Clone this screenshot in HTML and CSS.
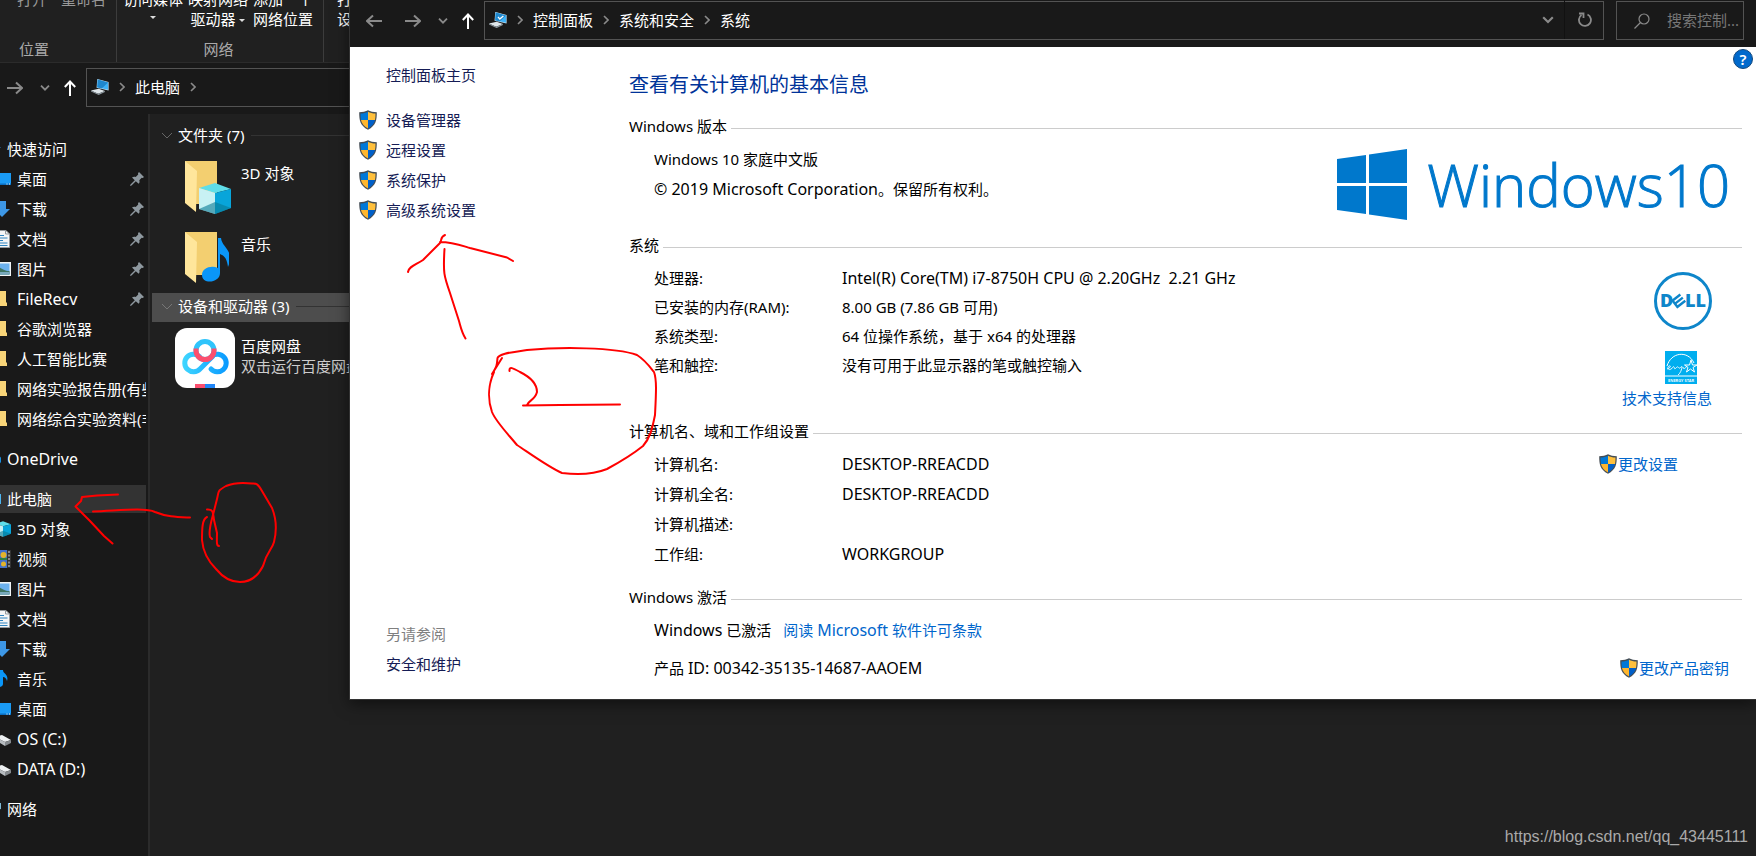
FILE: index.html
```html
<!DOCTYPE html>
<html lang="zh-CN">

<head>
    <meta charset="UTF-8">
    <meta name="viewport" content="width=device-width, initial-scale=1.0">
    <title>系统</title>
    <link rel="stylesheet" href="styles.css">
</head>

<body>
    <!-- shared icons -->
    <svg class="sprite" width="0" height="0">
        <symbol id="i-right" viewBox="0 0 16 16"><path d="M0 8h15M9 2.500L15 8l-6 5.500" fill="none" stroke="currentColor" stroke-width="2"/></symbol>
        <symbol id="i-left" viewBox="0 0 16 16"><path d="M16 8H1M7 2.500L1 8l6 5.500" fill="none" stroke="currentColor" stroke-width="2"/></symbol>
        <symbol id="i-up" viewBox="0 0 12 16"><path d="M6 16V1.500M.8 7L6 1.500 11.200 7" fill="none" stroke="currentColor" stroke-width="2"/></symbol>
        <symbol id="i-down" viewBox="0 0 10 6"><path d="M1 .7l4 4 4-4" fill="none" stroke="currentColor" stroke-width="1.800"/></symbol>
        <symbol id="i-next" viewBox="0 0 6 10"><path d="M1 1l4 4-4 4" fill="none" stroke="currentColor" stroke-width="1.600"/></symbol>
        <symbol id="i-shield" viewBox="0 0 18 20">
            <path d="M9 .3C6.800 1.600 3.500 2.200.2 2.200c0 8 .8 13.200 8.800 17.600 8-4.400 8.800-9.600 8.800-17.600C14.500 2.200 11.200 1.600 9 .3z" fill="#444d55"/>
            <path d="M9 1.700C7 2.800 4.300 3.400 1.500 3.500c0 2.400.1 4.500.5 6.500h7z" fill="#0078d7"/>
            <path d="M9 1.700c2 1.100 4.700 1.700 7.500 1.800 0 2.400-.1 4.500-.5 6.500H9z" fill="#ffc03c"/>
            <path d="M2 10c.8 3.700 2.900 6.300 7 8.500V10z" fill="#ffb62e"/>
            <path d="M16 10c-.8 3.700-2.900 6.300-7 8.500V10z" fill="#005fc8"/>
        </symbol>
        <symbol id="i-pc" viewBox="0 0 20 18">
            <path d="M7 0l12.500 3.500v9.500L6.200 9.800z" fill="#cfe2ee"/>
            <path d="M7.500.8L19 4v8L6.900 9.200z" fill="#3fb2f7"/>
            <path d="M7.500.8L19 4l-7 6.600-5.100-1.400z" fill="#1f87cd"/>
            <path d="M0 13l8.500-2 7 2.500-7.500 3z" fill="#dfe6ea"/>
            <path d="M0 13l8 3.500 7.500-3v1L8.500 18 0 14z" fill="#8c979e"/>
        </symbol>
        <symbol id="i-pin" viewBox="0 0 14 14"><path d="M9 0l5 5-1.300 1-1-.3-2.400 2.500c.5 1.500.3 2.500-.6 3.600L5.800 9.200 1.500 13.500 0 14l.5-1.500 4.300-4.300L2 5.500c1.200-1 2.300-1 3.700-.6l2.500-2.400L8 1.300z" fill="#8e989f"/></symbol>
        <symbol id="i-desktop" viewBox="0 0 16 16"><path d="M0 2h16v12H0z" fill="#1a9bf5"/><path d="M0 12.500h16V14H0z" fill="#0b6fc2"/><path d="M11.500 12.500h1v1h-1zM14 12.500h1v1h-1z" fill="#fff"/></symbol>
        <symbol id="i-download" viewBox="0 0 16 16"><path d="M3 0h8v8h4l-8 8-8-8h4z" fill="#3d97e6"/></symbol>
        <symbol id="i-doc" viewBox="0 0 16 18"><path d="M1 .5h10l3.500 3.500v13.500H1z" fill="#f4f6f7" stroke="#93999d"/><path d="M10.500.5V4h4" fill="none" stroke="#93999d"/><path d="M3 5.500h6M3 8h9.500M3 10.500h5M3 13h9.500M3 15.500h9.500" stroke="#2e84c0"/></symbol>
        <symbol id="i-pic" viewBox="0 0 16 14"><path d="M0 0h16v14H0z" fill="#f1f4f5"/><path d="M1.500 1.500h13v11h-13z" fill="#6cb2ef"/><path d="M1.500 5c5 0 6 4 13 4v3.500h-13z" fill="#3e7563"/><path d="M1.500 10h13v2.500h-13z" fill="#78a9bd"/></symbol>
        <symbol id="i-folder" viewBox="0 0 16 16"><path d="M0 0h11v11.500h1V15H0z" fill="#f7d478"/><path d="M0 0h4v16L0 15z" fill="#ffe79e"/></symbol>
        <symbol id="i-cube" viewBox="0 0 32 31"><path d="M16 0l16 6-16 4L0 5z" fill="#5fdde8"/><path d="M0 5l16 5v21L0 26z" fill="#c8f1f4"/><path d="M16 10l16-4v19l-16 6z" fill="#08a5da"/><path d="M0 26l16-7 16 6-16 6z" fill="#087a94" fill-opacity=".6"/></symbol>
        <symbol id="i-video" viewBox="0 0 16 18"><path d="M0 0h16v18H0z" fill="#333"/><path d="M0 0h12v18H0z" fill="#426fc9"/><circle cx="8.500" cy="5" r="3" fill="#e3b42b"/><path d="M5 8h7v2H5z" fill="#2c7d43"/><circle cx="8.500" cy="14" r="2.500" fill="#e3b42b"/><path d="M14 1v16" stroke="#888" stroke-width="2" stroke-dasharray="2 1.500"/></symbol>
        <symbol id="i-music" viewBox="0 0 27 44"><path d="M16 0h3c1 10 14 12 7 29-1-8-3-11-8-13v19c0 10-18 12-18 2 0-7 9-10 16-7z" fill="#0a96f8"/></symbol>
        <symbol id="i-disk" viewBox="0 0 16 16"><path d="M0 6l7-2 9 5-6 2z" fill="#eceff1"/><path d="M0 6l10 5v4L0 9z" fill="#b7bcc0"/><path d="M10 11l6-2v3l-6 3z" fill="#84898d"/></symbol>
        <symbol id="i-bigfolder" viewBox="0 0 32 51"><path d="M0 0h32v43H8z" fill="#f3cf70"/><path d="M0 0l12 10-1 41L0 42z" fill="#ffe69b"/></symbol>
    </svg>

    <div class="explorer">
        <div class="ribbon">
            <div class="ribbon-group group-place">
                <div class="ribbon-items">
                    <button class="ribbon-button off">打开</button>
                    <button class="ribbon-button off">重命名</button>
                </div>
                <div class="ribbon-label">位置</div>
            </div>
            <div class="ribbon-group group-net">
                <div class="ribbon-items">
                    <button class="ribbon-button">访问媒体<br><i class="caret up"></i></button>
                    <button class="ribbon-button">映射网络<br>驱动器 <i class="caret"></i></button>
                    <button class="ribbon-button">添加一个<br>网络位置</button>
                </div>
                <div class="ribbon-label">网络</div>
            </div>
            <div class="ribbon-group group-settings">
                <div class="ribbon-items">
                    <button class="ribbon-button">打开<br>设置</button>
                </div>
            </div>
        </div>

        <div class="address-row">
            <button class="nav-button" aria-label="前进"><svg width="16" height="16"><use href="#i-right"/></svg></button>
            <button class="nav-button" aria-label="最近"><svg width="10" height="6"><use href="#i-down"/></svg></button>
            <button class="nav-button bright" aria-label="上移"><svg width="12" height="16"><use href="#i-up"/></svg></button>
            <div class="address-box">
                <svg width="18" height="18"><use href="#i-pc"/></svg>
                <svg class="sep" width="6" height="10"><use href="#i-next"/></svg>
                <span>此电脑</span>
                <svg class="sep" width="6" height="10"><use href="#i-next"/></svg>
            </div>
        </div>

        <div class="explorer-body">
            <nav class="tree">
                <ul class="tree-group">
                    <li class="tree-item"><svg viewBox="0 0 16 16"><path d="M8 1l2 5h6l-5 4 2 6-5-4-5 4 2-6-5-4h6z" fill="#2f9df0"/></svg><span>快速访问</span></li>
                    <li class="tree-item child"><svg><use href="#i-desktop"/></svg><span>桌面</span><svg class="pin"><use href="#i-pin"/></svg></li>
                    <li class="tree-item child"><svg><use href="#i-download"/></svg><span>下载</span><svg class="pin"><use href="#i-pin"/></svg></li>
                    <li class="tree-item child"><svg><use href="#i-doc"/></svg><span>文档</span><svg class="pin"><use href="#i-pin"/></svg></li>
                    <li class="tree-item child"><svg><use href="#i-pic"/></svg><span>图片</span><svg class="pin"><use href="#i-pin"/></svg></li>
                    <li class="tree-item child"><svg><use href="#i-folder"/></svg><span class="latin">FileRecv</span><svg class="pin"><use href="#i-pin"/></svg></li>
                    <li class="tree-item child"><svg><use href="#i-folder"/></svg><span>谷歌浏览器</span></li>
                    <li class="tree-item child"><svg><use href="#i-folder"/></svg><span>人工智能比赛</span></li>
                    <li class="tree-item child"><svg><use href="#i-folder"/></svg><span>网络实验报告册(有些</span></li>
                    <li class="tree-item child"><svg><use href="#i-folder"/></svg><span>网络综合实验资料(非</span></li>
                </ul>
                <ul class="tree-group">
                    <li class="tree-item"><svg viewBox="0 0 16 16"><circle cx="12" cy="9" r="4.500" fill="#1a8fe0"/></svg><span class="latin">OneDrive</span></li>
                </ul>
                <ul class="tree-group">
                    <li class="tree-item selected"><svg viewBox="0 0 16 16"><path d="M0 3h16v10H0z" fill="#4db5f0"/></svg><span>此电脑</span></li>
                    <li class="tree-item child"><svg><use href="#i-cube"/></svg><span>3D 对象</span></li>
                    <li class="tree-item child"><svg><use href="#i-video"/></svg><span>视频</span></li>
                    <li class="tree-item child"><svg><use href="#i-pic"/></svg><span>图片</span></li>
                    <li class="tree-item child"><svg><use href="#i-doc"/></svg><span>文档</span></li>
                    <li class="tree-item child"><svg><use href="#i-download"/></svg><span>下载</span></li>
                    <li class="tree-item child"><svg viewBox="0 0 16 18"><path d="M5 0h3c0 4 6 4 4 11-1-3-2-4-4-4v7c0 4-8 4-8 0 0-3 3-4 5-3z" fill="#0a96f8"/></svg><span>音乐</span></li>
                    <li class="tree-item child"><svg><use href="#i-desktop"/></svg><span>桌面</span></li>
                    <li class="tree-item child"><svg><use href="#i-disk"/></svg><span class="latin">OS (C:)</span></li>
                    <li class="tree-item child"><svg><use href="#i-disk"/></svg><span class="latin">DATA (D:)</span></li>
                </ul>
                <ul class="tree-group">
                    <li class="tree-item"><svg viewBox="0 0 16 16"><path d="M4 3l12-1v6L6 11z" fill="#7fb9d4"/></svg><span>网络</span></li>
                </ul>
            </nav>

            <div class="files">
                <div class="files-header"><svg width="12" height="7" viewBox="0 0 12 7"><path d="M1 1l5 5 5-5" fill="none" stroke="#666"/></svg>文件夹 (7)</div>
                <div class="file">
                    <svg class="file-icon" viewBox="0 0 60 60">
                        <use href="#i-bigfolder" x="10" y="4" width="32" height="51"/>
                        <use href="#i-cube" x="24" y="26" width="32" height="31"/>
                    </svg>
                    <div class="file-text">3D 对象</div>
                </div>
                <div class="file">
                    <svg class="file-icon" viewBox="0 0 60 60">
                        <use href="#i-bigfolder" x="10" y="4" width="32" height="51"/>
                        <use href="#i-music" x="27" y="10" width="27" height="44"/>
                    </svg>
                    <div class="file-text">音乐</div>
                </div>
                <div class="files-header active"><svg width="12" height="7" viewBox="0 0 12 7"><path d="M1 1l5 5 5-5" fill="none" stroke="#777"/></svg>设备和驱动器 (3)</div>
                <div class="file">
                    <svg class="file-icon" viewBox="0 0 60 60">
                        <defs>
                            <linearGradient id="bd" gradientUnits="userSpaceOnUse" x1="8" y1="0" x2="52" y2="0"><stop offset="0" stop-color="#3fd6ff"/><stop offset="1" stop-color="#0a9bff"/></linearGradient>
                        </defs>
                        <rect width="60" height="60" rx="12" fill="#fff"/>
                        <circle cx="30" cy="22.500" r="9" fill="none" stroke="#2fc4fb" stroke-width="5"/>
                        <path d="M38 28L25 41a8.800 8.800 0 1 1-.5-12.500M36 41a8.800 8.800 0 1 0 1-13" fill="none" stroke="url(#bd)" stroke-width="5" stroke-linecap="round"/>
                        <path d="M21 20.500v2a9 9 0 1 0 18 0v-2" fill="none" stroke="#fb4f6f" stroke-width="5"/>
                        <path d="M20 56h10v4H20z" fill="#fb4f6f"/><path d="M30 56h10v4H30z" fill="#2086f8"/>
                    </svg>
                    <div class="file-text">百度网盘<br><span class="file-note">双击运行百度网盘</span></div>
                </div>
            </div>
        </div>
    </div>

    <div class="cp-window">
        <div class="cp-bar">
            <button class="nav-button back" aria-label="后退"><svg width="16" height="16"><use href="#i-left"/></svg></button>
            <button class="nav-button" aria-label="前进"><svg width="16" height="16"><use href="#i-right"/></svg></button>
            <button class="nav-button" aria-label="最近"><svg width="10" height="6"><use href="#i-down"/></svg></button>
            <button class="nav-button bright" aria-label="上移"><svg width="12" height="16"><use href="#i-up"/></svg></button>
            <div class="address-box">
                <svg width="18" height="18" viewBox="0 0 20 18"><use href="#i-pc" width="20" height="18"/><path d="M10 5.500l2 2.500 4-3.500" fill="none" stroke="#fff" stroke-width="1.500"/></svg>
                <svg class="sep" width="6" height="10"><use href="#i-next"/></svg>
                <span>控制面板</span>
                <svg class="sep" width="6" height="10"><use href="#i-next"/></svg>
                <span>系统和安全</span>
                <svg class="sep" width="6" height="10"><use href="#i-next"/></svg>
                <span>系统</span>
                <button class="nav-button drop" aria-label="历史"><svg width="12" height="8"><use href="#i-down"/></svg></button>
                <button class="nav-button refresh" aria-label="刷新"><svg width="14" height="15" viewBox="0 0 14 15"><path d="M9.500 2.500A6 6 0 1 1 3.500 3M1 1.500h4.500V6" fill="none" stroke="currentColor" stroke-width="1.800"/></svg></button>
            </div>
            <label class="search-box">
                <svg width="16" height="16" viewBox="0 0 16 16"><circle cx="10" cy="6" r="5" fill="none" stroke="#8a8a8a" stroke-width="1.200"/><path d="M6.500 9.500L.5 15.500" stroke="#8a8a8a" stroke-width="1.200"/></svg>
                <input type="text" placeholder="搜索控制..." aria-label="搜索控制面板">
            </label>
        </div>

        <div class="cp-body">
            <nav class="cp-nav">
                <a class="cp-home" href="#">控制面板主页</a>
                <a class="shield-link" href="#"><svg><use href="#i-shield"/></svg>设备管理器</a>
                <a class="shield-link" href="#"><svg><use href="#i-shield"/></svg>远程设置</a>
                <a class="shield-link" href="#"><svg><use href="#i-shield"/></svg>系统保护</a>
                <a class="shield-link" href="#"><svg><use href="#i-shield"/></svg>高级系统设置</a>
                <div class="see-also">
                    <p>另请参阅</p>
                    <a href="#">安全和维护</a>
                </div>
            </nav>

            <main class="cp-main">
                <button class="help" aria-label="帮助">?</button>
                <h1>查看有关计算机的基本信息</h1>

                <section class="edition">
                    <h2>Windows 版本</h2>
                    <div class="section-body">
                        <div class="lines">
                            <p>Windows 10 家庭中文版</p>
                            <p><span class="latin">© 2019 Microsoft Corporation</span>。保留所有权利。</p>
                        </div>
                        <div class="win-logo">
                            <svg width="70" height="71" viewBox="0 0 70 71"><path d="M0 10l29-4v28H0zM32 5.500L70 0v34H32zM0 37h29v28L0 61zM32 37h38v34l-38-5.500z" fill="#0078cc"/></svg>
                            <span class="win-word">Windows</span><span class="win-word">10</span>
                        </div>
                    </div>
                </section>

                <section class="system">
                    <h2>系统</h2>
                    <div class="section-body">
                        <dl class="facts compact">
                            <dt>处理器:</dt><dd class="latin">Intel(R) Core(TM) i7-8750H CPU @ 2.20GHz &nbsp;2.21 GHz</dd>
                            <dt>已安装的内存(RAM):</dt><dd>8.00 GB (7.86 GB 可用)</dd>
                            <dt>系统类型:</dt><dd>64 位操作系统，基于 x64 的处理器</dd>
                            <dt>笔和触控:</dt><dd>没有可用于此显示器的笔或触控输入</dd>
                        </dl>
                        <div class="vendor">
                            <svg width="58" height="58" viewBox="0 0 58 58">
                                <circle cx="29" cy="29" r="27.500" fill="none" stroke="#0e86ca" stroke-width="3"/>
                                <text x="6" y="35" class="dell">D</text>
                                <g transform="rotate(-38 24.500 29)" stroke="#0e86ca" stroke-width="2.400" fill="none"><path d="M19 25h11M19 29h11M19 33h11M20 24v10"/></g>
                                <text x="31" y="35" class="dell">LL</text>
                            </svg>
                            <svg class="energy" width="32" height="33" viewBox="0 0 32 33">
                                <path d="M0 0h32v33H0z" fill="#00aeef"/>
                                <path d="M2 15C6 1 23-1 29 12M26 9l1.500 5H32l-4 2.500 1.500 4.500-4-3-4 3 1.500-4.500-3.500-2.500h5z" fill="none" stroke="#fff" stroke-width="1"/>
                                <path d="M2 18c4-1 4-4 2-3s-1 5 2 3 2-3 3-2 0 3 2 1 2-1 3 0 3-3 3-1-2 7-4 8M18 16c0 3 3 1 4-1" fill="none" stroke="#fff" stroke-width=".9"/>
                                <path d="M0 25h32" stroke="#fff"/>
                                <text x="16" y="31" text-anchor="middle" class="energy-text">ENERGY STAR</text>
                            </svg>
                            <a href="#">技术支持信息</a>
                        </div>
                    </div>
                </section>

                <section class="naming">
                    <h2>计算机名、域和工作组设置</h2>
                    <div class="section-body">
                        <dl class="facts">
                            <dt>计算机名:</dt><dd class="latin">DESKTOP-RREACDD</dd>
                            <dt>计算机全名:</dt><dd class="latin">DESKTOP-RREACDD</dd>
                            <dt>计算机描述:</dt><dd></dd>
                            <dt>工作组:</dt><dd class="latin">WORKGROUP</dd>
                        </dl>
                        <a class="action" href="#"><svg><use href="#i-shield"/></svg>更改设置</a>
                    </div>
                </section>

                <section class="activation">
                    <h2>Windows 激活</h2>
                    <div class="section-body">
                        <div class="lines">
                            <p><span class="latin">Windows</span> 已激活<a class="terms" href="#">阅读 <span class="latin">Microsoft</span> 软件许可条款</a></p>
                            <p>产品 <span class="latin">ID: 00342-35135-14687-AAOEM</span></p>
                        </div>
                        <a class="action" href="#"><svg><use href="#i-shield"/></svg>更改产品密钥</a>
                    </div>
                </section>
            </main>
        </div>
    </div>

    <!-- red pen marks -->
    <svg class="marks" width="700" height="600">
        <path d="M118 494.500L97 495.500 82 497 81 501 75.500 506.500 90 521 104 536 112.500 543.500"/>
        <path d="M93 511.500C115 511 145 507 155 512 167 517 178 517 190 517.500"/>
        <path d="M207 517C202 519 202 530 202 540 203 552 209 562 216 569 225 580 233 582 240 582 251 582 258 576 263 566 267 551 272 550 274 542 277 530 276 518 272 508L262 491C258 484 256 483 252 483.500 240 482 233 483 226 486 217 491 219 491 217 499L214 511C212 519 208 530 210 537L212 539"/>
        <path d="M207 509.500C213 509 213 512 214 520L217 533C217 540 216 546 219 546"/>
        <path d="M445 235C440 237 442 240 440 243L423 260C416 265 409 266 408 272M440 242C452 242 460 245 470 248L507 257.500 513 261"/>
        <path d="M444.500 249C443 273 444 276 450 293L459 321C462 332 462 333 465.500 338.500"/>
        <path d="M492 374L502 358M492 374C497 366 497 365 497.500 358 499 353 515 352 527 350 560 347 615 347 637 355 645 360 650 367 654 372 657 380 656 395 655 415 652 430 650 438 643 446 633 454 620 462 607 469 592 475 578 475 562 473 550 468 532 455 517 445 508 434 496 422 492 412 487 398 489 383 494 372 502 358"/>
        <path d="M509.500 371C509 366 513 368 520 372 532 378 537 384 537 392 535 400 529 400 527 405M523 405.500L560 405 620 404.500"/>
    </svg>

    <div class="watermark">https://blog.csdn.net/qq_43445111</div>
</body>

</html>
```
FILE: styles.css
```css
* {
    box-sizing: border-box;
}

body {
    margin: 0;
    position: relative;
    height: 100vh;
    overflow: hidden;
    background-color: #202020;
    color: #fff;
    font-family: "Noto Sans", "Noto Sans CJK SC", sans-serif;
    font-size: 15px;
    line-height: 20px;
}

h1, h2, p, ul, dl, dd {
    margin: 0;
    padding: 0;
    font-weight: normal;
}

button {
    border: none;
    padding: 0;
    background: none;
    color: inherit;
    font: inherit;
}

a {
    text-decoration: none;
}

svg {
    display: block;
    flex: none;
}

.sprite {
    position: absolute;
}

/* latin text runs a little larger than the chinese */
.latin {
    font-size: 16px;
}

/* explorer window */
.explorer {
    display: flex;
    flex-direction: column;
    height: 100%;
}

.ribbon {
    display: flex;
    height: 63px;
    overflow: hidden;
    border-bottom: 1px solid #2b2b2b;
}

.ribbon-group {
    display: flex;
    flex-direction: column;
    flex: none;
    border-right: 1px solid #3c3c3c;
}

.ribbon-items {
    display: flex;
    align-items: flex-start;
    height: 50px;
    margin-top: -11px;
}

.ribbon-button {
    white-space: nowrap;
}

.off {
    color: #999;
}

.ribbon-label {
    color: #aaa;
    text-align: center;
}

.group-place {
    width: 117px;
}

.group-place .ribbon-items {
    gap: 14px;
    padding-left: 17px;
}

.group-place .ribbon-label {
    padding-right: 48px;
}

.group-net {
    width: 207px;
}

.group-net .ribbon-items {
    gap: 5px;
    padding-left: 6px;
}

.group-net .ribbon-label {
    padding-right: 3px;
}

.group-settings {
    padding-left: 13px;
}

.caret {
    display: inline-block;
    border: 3px solid transparent;
    border-top-color: #ddd;
    border-bottom: none;
    vertical-align: middle;
}

.caret.up {
    vertical-align: super;
}

.address-row {
    display: flex;
    align-items: center;
    gap: 17px;
    height: 51px;
    padding: 0 0 2px 7px;
    background-color: #191919;
}

.nav-button {
    color: #8a8a8a;
}

.bright {
    margin: 0 -7px 0 -3px;
    color: #fff;
}

.address-box {
    display: flex;
    align-items: center;
    gap: 10px;
    flex: 1;
    height: 39px;
    padding: 0 0 2px 4px;
    border: 1px solid #535353;
}

.sep {
    color: #8a8a8a;
}

.explorer-body {
    display: flex;
    flex: 1;
    min-height: 0;
}

.tree {
    width: 150px;
    flex: none;
    padding: 21px 2px 0 0;
    border-right: 2px solid #2b2b2b;
    background-color: #191919;
    overflow: hidden;
}

.tree-group {
    display: flow-root;
    margin: 0 0 10px -15px;
    list-style: none;
}

.tree-item {
    display: flex;
    align-items: center;
    gap: 6px;
    height: 28px;
    margin-bottom: 2px;
    overflow: hidden;
    white-space: nowrap;
}

.tree-item svg {
    width: 16px;
    height: 18px;
}

.tree-item.child {
    padding-left: 10px;
}

.tree-item .pin {
    width: 14px;
    height: 14px;
    margin: 0 2px 0 auto;
}

.selected {
    background-color: #333;
}

.files {
    flex: 1;
    padding: 8px 0 0 2px;
}

.files-header {
    display: flex;
    align-items: center;
    gap: 5px;
    height: 29px;
    padding: 0 0 3px 9px;
}

.files-header::after {
    content: "";
    flex: 1;
    height: 1px;
    margin-left: 2px;
    background-color: #333;
}

.files-header.active {
    background-color: #4d4d4d;
}

.file {
    display: flex;
    gap: 6px;
    height: 71px;
    padding: 6px 0 0 23px;
}

.file-icon {
    width: 60px;
    height: 60px;
}

.file-text {
    padding-top: 6px;
}

.active + .file .file-text {
    padding-top: 8px;
}

.file-note {
    color: #ccc;
}

/* control panel window */
.cp-window {
    position: absolute;
    top: 0;
    left: 349px;
    right: 0;
    border: 1px solid #333;
    border-width: 0 0 1px 1px;
    background-color: #fff;
    color: #000;
    box-shadow: 0 4px 14px rgba(0, 0, 0, 0.5);
}

.cp-bar {
    display: flex;
    align-items: flex-start;
    gap: 17px;
    height: 47px;
    padding: 1px 12px 0 16px;
    background-color: #191919;
    color: #fff;
}

.cp-bar .nav-button {
    height: 39px;
}

.back {
    margin-right: 6px;
}

.cp-bar > .address-box {
    margin-right: -5px;
}

.drop {
    margin-left: auto;
}

.refresh {
    padding: 0 11px 0 13px;
    border-left: 1px solid #111;
}

.search-box {
    display: flex;
    align-items: center;
    gap: 17px;
    width: 128px;
    height: 39px;
    padding-left: 17px;
    border: 1px solid #535353;
}

.search-box input {
    width: 75px;
    padding: 0 0 2px;
    border: none;
    outline: none;
    background: none;
    color: #fff;
    font: inherit;
}

.search-box input::placeholder {
    color: #777;
}

.cp-body {
    display: flex;
}

.cp-nav {
    display: flex;
    flex-direction: column;
    width: 279px;
    flex: none;
    padding: 18px 0 21px 9px;
}

.cp-nav a {
    color: #151c55;
}

.cp-nav .cp-home {
    margin-bottom: 20px;
    padding-left: 27px;
}

.shield-link {
    display: flex;
    align-items: center;
    gap: 9px;
    height: 30px;
}

.shield-link svg,
.action svg {
    width: 18px;
    height: 20px;
}

.see-also {
    margin-top: auto;
    padding: 0 0 4px 27px;
    color: #7f7f7f;
}

.see-also p {
    margin-bottom: 10px;
}

.cp-main {
    position: relative;
    flex: 1;
    padding: 24px 14px 16px 0;
}

.cp-main a {
    color: #0066cc;
}

.help {
    position: absolute;
    top: 2px;
    right: 3px;
    width: 20px;
    height: 20px;
    border: 1px solid #14487c;
    border-radius: 50%;
    background-color: #0069cc;
    color: #fff;
    font-weight: 600;
    line-height: 18px;
}

h1 {
    margin-bottom: 17px;
    color: #003399;
    font-size: 20px;
    line-height: 28px;
}

h2 {
    display: flex;
    align-items: center;
    gap: 4px;
    margin-bottom: 8px;
    font-size: 15px;
}

h2::after {
    content: "";
    flex: 1;
    height: 1px;
    margin-top: 5px;
    background-color: #ccc;
}

.section-body {
    display: flex;
    align-items: flex-start;
    justify-content: space-between;
    padding-left: 25px;
}

.lines {
    line-height: 30px;
}

.edition {
    margin-bottom: 15px;
}

.win-logo {
    display: flex;
    align-items: center;
    padding: 5px 12px 0 0;
    color: #0078cc;
}

.win-logo svg {
    margin-right: 20px;
}

.win-word {
    font-family: "Open Sans", sans-serif;
    font-size: 58px;
    font-weight: 300;
    line-height: 70px;
    -webkit-text-stroke: 1px #0078cc;
}

.facts {
    display: grid;
    grid-template-columns: 188px auto;
    grid-auto-rows: 30px;
    line-height: 30px;
}

.facts.compact {
    grid-auto-rows: 29px;
    line-height: 29px;
}

.system {
    margin-bottom: 13px;
}

.system h2 {
    margin-bottom: 9px;
}

.vendor {
    display: flex;
    flex-direction: column;
    align-items: flex-end;
    padding: 8px 30px 0 0;
}

.energy {
    margin: 21px 15px 4px 0;
}

.dell {
    fill: #0e86ca;
    font-family: "Open Sans", sans-serif;
    font-size: 18px;
    font-weight: 800;
}

.energy-text {
    fill: #fff;
    font-size: 4px;
    font-weight: 600;
}

.naming {
    margin-bottom: 18px;
}

.action {
    display: flex;
    align-items: center;
    gap: 1px;
    height: 30px;
}

.naming .action {
    margin-right: 64px;
}

.activation .action {
    margin-right: 13px;
    align-self: flex-end;
}

.activation p + p {
    margin-top: 8px;
}

.terms {
    margin-left: 12px;
}

.marks {
    position: absolute;
    top: 0;
    left: 0;
    pointer-events: none;
    fill: none;
    stroke: #f00;
    stroke-width: 2;
    stroke-linecap: round;
    stroke-linejoin: round;
}

.watermark {
    position: absolute;
    right: 8px;
    bottom: 9px;
    color: #aaa;
    font-family: "Liberation Sans", sans-serif;
    font-size: 16px;
}
```
